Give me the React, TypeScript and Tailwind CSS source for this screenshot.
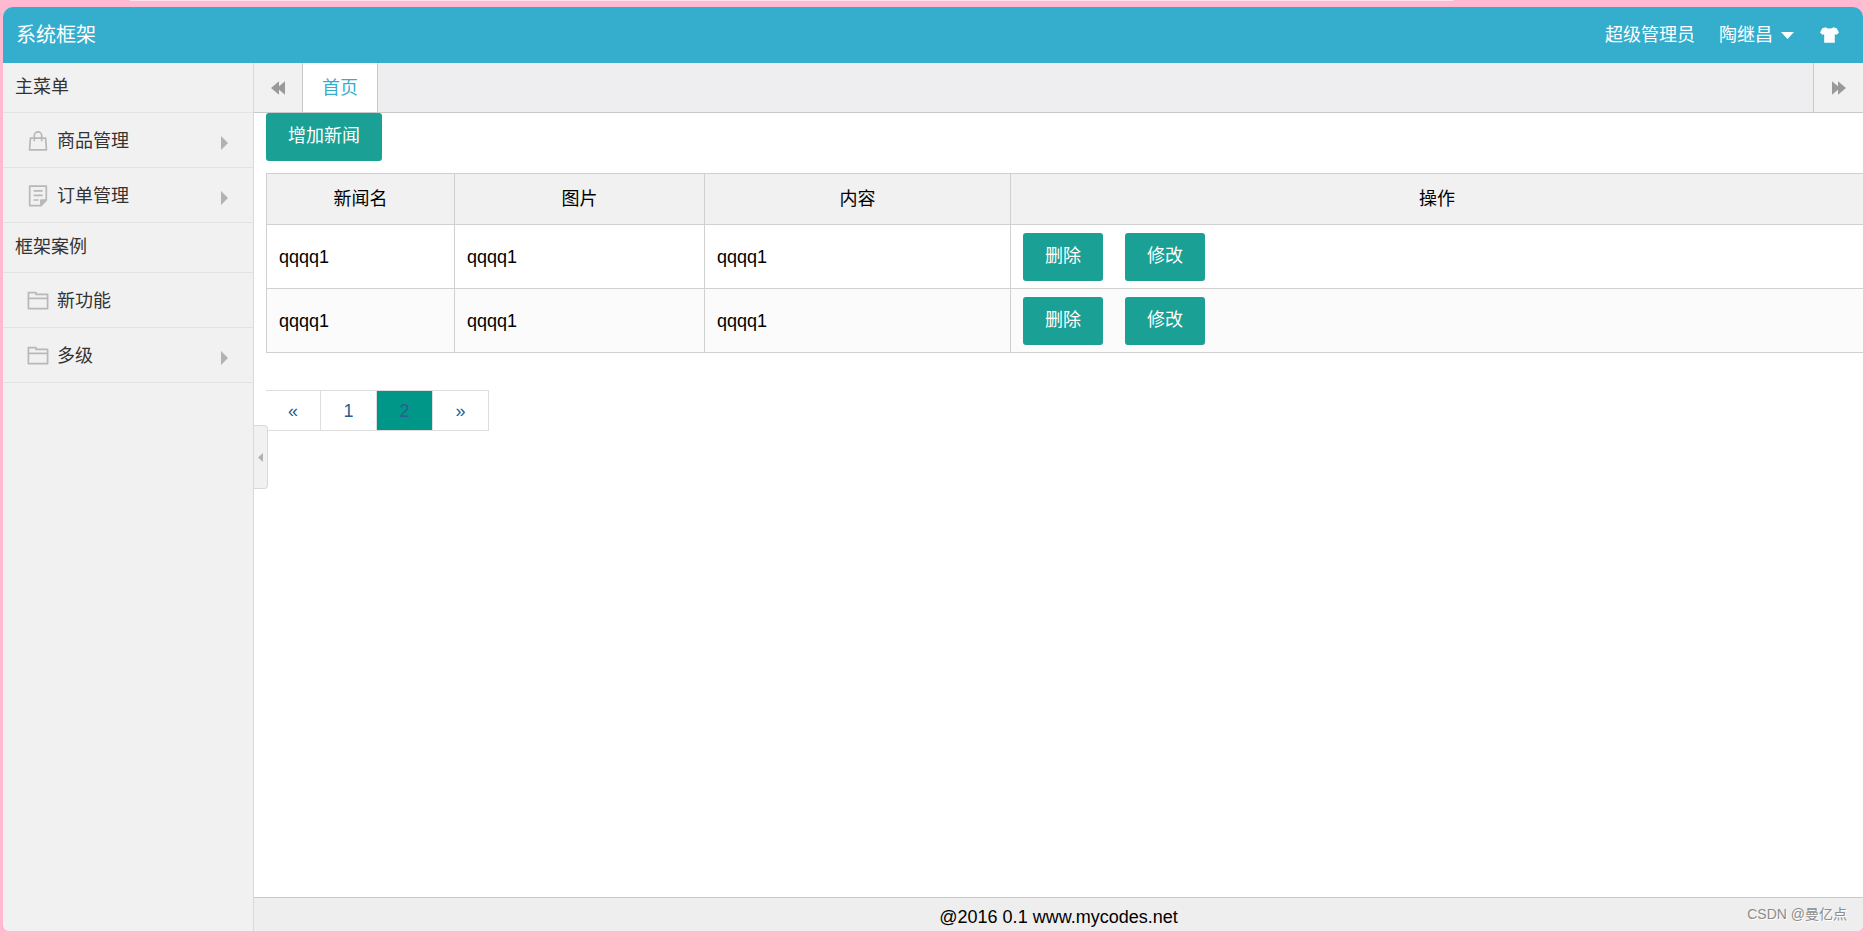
import { useState } from 'react'

interface MenuItem {
  label: string
  icon: 'bag' | 'note' | 'folder'
  children: boolean
}

interface MenuGroup {
  title: string
  items: MenuItem[]
}

const MENU: MenuGroup[] = [
  {
    title: '主菜单',
    items: [
      { label: '商品管理', icon: 'bag', children: true },
      { label: '订单管理', icon: 'note', children: true },
    ],
  },
  {
    title: '框架案例',
    items: [
      { label: '新功能', icon: 'folder', children: false },
      { label: '多级', icon: 'folder', children: true },
    ],
  },
]

const NEWS = [
  { id: 1, name: 'qqqq1', image: 'qqqq1', content: 'qqqq1' },
  { id: 2, name: 'qqqq1', image: 'qqqq1', content: 'qqqq1' },
]

const PAGES = ['«', '1', '2', '»']

function MenuIcon({ name }: { name: MenuItem['icon'] }) {
  return (
    <svg viewBox="0 0 22 22" className="h-[22px] w-[22px] shrink-0" fill="none" stroke="#b8b8b8" strokeWidth="1.7" strokeLinejoin="round">
      {name === 'bag' && (
        <>
          <path d="M3.4 8.2h15.2l.9 11.6h-17z" />
          <path d="M7.3 11.2V5.6a3.7 3.7 0 0 1 7.4 0v5.6" />
        </>
      )}
      {name === 'note' && (
        <>
          <path d="M2.7 1.2h16.6v13.6l-5.4 5.8H2.7z" />
          <path d="M6.6 5.8h9M6.6 10.4h9M6.6 15h5" />
          <path d="M13.9 20.4v-5.4h5.2z" fill="#b8b8b8" />
        </>
      )}
      {name === 'folder' && (
        <>
          <path d="M1.4 18.6V2.6h7.6v1.8h11.6v14.2z" />
          <path d="M1.4 8.4h19.2" />
        </>
      )}
    </svg>
  )
}

function ActionButton({ label }: { label: string }) {
  return (
    <button className="h-12 cursor-pointer rounded-[3px] bg-[#1aa094] px-[22px] pb-0.5 text-lg text-white hover:opacity-80">
      {label}
    </button>
  )
}

export default function App() {
  const [page, setPage] = useState('2')
  const [collapsed, setCollapsed] = useState(false)

  return (
    <div className="relative flex min-h-screen flex-col bg-[#ffb9d0] pt-[7px] pl-[3px] font-['Liberation_Sans','Noto_Sans_CJK_SC',sans-serif] text-lg text-black">
      <div className="absolute top-0 right-[22%] left-[7%] h-px bg-[#ffe3ec]" />

      <header className="flex h-14 items-center justify-between rounded-t-[10px] bg-[#35aece] pr-6 pl-[13px] text-white">
        <h1 className="text-xl">系统框架</h1>
        <div className="flex items-center">
          <span className="mr-6">超级管理员</span>
          <button className="flex cursor-pointer items-center gap-2">
            陶继昌
            <svg viewBox="0 0 13 7" className="h-[7px] w-[13px]" fill="currentColor">
              <path d="M0 0h13L6.5 7z" />
            </svg>
          </button>
          <button aria-label="换肤" className="ml-[26px] cursor-pointer">
            <svg viewBox="0 0 19 16" className="h-4 w-[19px]" fill="currentColor">
              <path d="M5.8.2C7 2 12 2 13.2.2L16.6 1.2 19 5.4 16.6 7.8 14.8 7.2V15.8H4.2V7.2L2.4 7.8 0 5.4 2.4 1.2z" />
            </svg>
          </button>
        </div>
      </header>

      <div className="flex flex-1">
        {!collapsed && (
          <nav className="w-[251px] shrink-0 rounded-bl-[6px] border-r border-[#d9d9d9] bg-[#f1f1f1] text-[#333]">
            {MENU.map((group) => (
              <section key={group.title}>
                <h2 className="flex h-[50px] items-center border-b border-[#e3e3e3] px-3 pb-0.5">{group.title}</h2>
                <ul>
                  {group.items.map((item) => (
                    <li key={item.label} className="border-b border-[#e3e3e3]">
                      <a href="#" className="flex h-[54px] items-center gap-2 pt-0.5 pr-[25px] pl-6">
                        <MenuIcon name={item.icon} />
                        <span className="flex-1">{item.label}</span>
                        {item.children && (
                          <svg viewBox="0 0 7 14" className="mt-1 h-3.5 w-[7px]" fill="#b2b2b2">
                            <path d="M0 0l7 7-7 7z" />
                          </svg>
                        )}
                      </a>
                    </li>
                  ))}
                </ul>
              </section>
            ))}
          </nav>
        )}

        <div className="relative flex min-w-0 flex-1 flex-col rounded-br-[6px] bg-white">
          <div className="flex h-[50px] border-b border-[#c9c9c9] bg-[#eeeef0]">
            <button aria-label="向左" className="flex w-[49px] cursor-pointer items-center justify-center border-r border-[#c9c9c9] bg-[#f1f1f1]">
              <svg viewBox="0 0 14 14" className="h-3.5 w-3.5" fill="#999">
                <path d="M8 .2v13.6L0 7zM14 .2v13.6L6 7z" />
              </svg>
            </button>
            <a href="#" className="flex items-center border-r border-[#c9c9c9] bg-white px-[19px] text-[#35aece]">首页</a>
            <button aria-label="向右" className="ml-auto flex w-[50px] cursor-pointer items-center justify-center border-l border-[#c9c9c9] bg-[#f1f1f1]">
              <svg viewBox="0 0 14 14" className="h-3.5 w-3.5" fill="#999">
                <path d="M0 .2l8 6.8-8 6.8zM6 .2l8 6.8-8 6.8z" />
              </svg>
            </button>
          </div>

          <main className="flex-1 pl-3">
            <ActionButton label="增加新闻" />

            <table className="mt-3 w-full table-fixed border-collapse text-left">
              <colgroup>
                <col className="w-[188px]" />
                <col className="w-[250px]" />
                <col className="w-[306px]" />
                <col />
              </colgroup>
              <thead>
                <tr className="h-[51px] bg-[#f1f1f1] text-center">
                  <th className="border border-[#d0d0d0] font-normal">新闻名</th>
                  <th className="border border-[#d0d0d0] font-normal">图片</th>
                  <th className="border border-[#d0d0d0] font-normal">内容</th>
                  <th className="border border-r-0 border-[#d0d0d0] font-normal">操作</th>
                </tr>
              </thead>
              <tbody>
                {NEWS.map((row) => (
                  <tr key={row.id} className="even:bg-[#fbfbfb]">
                    <td className="border border-[#d0d0d0] px-3">{row.name}</td>
                    <td className="border border-[#d0d0d0] px-3">{row.image}</td>
                    <td className="border border-[#d0d0d0] px-3">{row.content}</td>
                    <td className="border border-r-0 border-[#d0d0d0] px-3 pt-2 pb-[7px]">
                      <div className="flex gap-[22px]">
                        <ActionButton label="删除" />
                        <ActionButton label="修改" />
                      </div>
                    </td>
                  </tr>
                ))}
              </tbody>
            </table>

            <div className="mt-[37px] flex">
              {PAGES.map((p) => (
                <button
                  key={p}
                  onClick={() => (p === '1' || p === '2') && setPage(p)}
                  className={`-mr-px h-[41px] w-[57px] cursor-pointer border border-[#ddd] text-[#2a5f8f] first:w-[55px] first:border-l-0 ${
                    p === page ? 'bg-[#009688]' : 'bg-white'
                  }`}
                >
                  {p}
                </button>
              ))}
            </div>
          </main>

          <button
            aria-label="收起菜单"
            onClick={() => setCollapsed(!collapsed)}
            className="absolute top-[362px] left-0 flex h-16 w-3.5 cursor-pointer items-center justify-center rounded-r-[4px] border border-l-0 border-[#d9d9d9] bg-[#f1f1f1]"
          >
            <svg viewBox="0 0 5 9" className="h-[9px] w-[5px]" fill="#b2b2b2">
              <path d="M5 0v9L0 4.5z" />
            </svg>
          </button>

          <footer className="relative flex h-[34px] items-center justify-center rounded-br-[6px] border-t border-[#c9c9c9] bg-[#eee] pt-1">
            @2016 0.1 www.mycodes.net
            <span className="absolute top-1.5 right-4 text-sm text-[#8c8c8c] [text-shadow:1px_1px_0_#fff]">CSDN @曼亿点</span>
          </footer>
        </div>
      </div>
    </div>
  )
}
